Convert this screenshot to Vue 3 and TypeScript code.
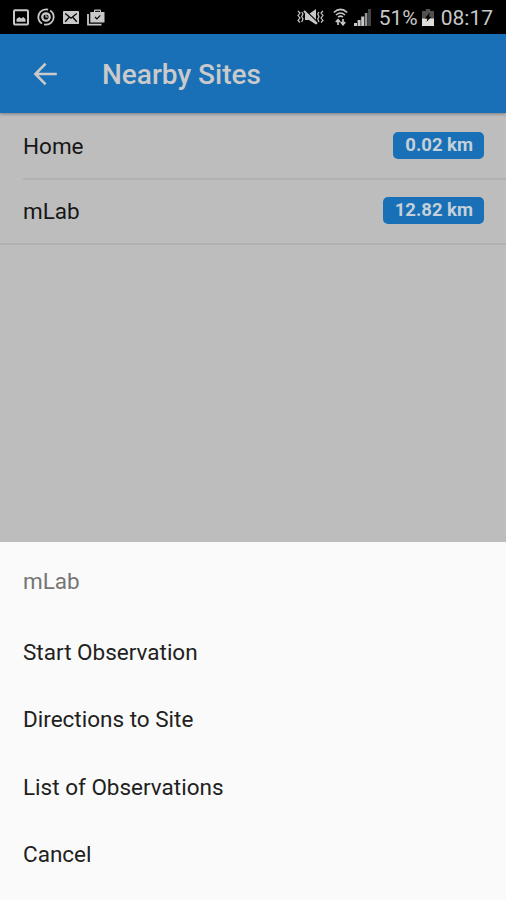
<script setup lang="ts">
interface Site {
  name: string
  distance: string
}

const sites: Site[] = [
  { name: 'Home', distance: '0.02 km' },
  { name: 'mLab', distance: '12.82 km' },
]

const selectedSite = 'mLab'
const actions: string[] = ['Start Observation', 'Directions to Site', 'List of Observations', 'Cancel']
</script>

<template>
  <div class="screen">
    <div class="status">
      <div class="notifications">
        <svg width="16" height="17" viewBox="0 0 16 17">
          <rect x="1" y="1.2" width="14" height="14.4" rx="1" fill="none" stroke="currentColor" stroke-width="2" />
          <path d="M3.5 12.7V10l2.8-2 2 1.5 1.8-1.5 2.4 2v2.7z" fill="currentColor" />
        </svg>
        <svg width="18" height="18" viewBox="0 0 18 18" fill="none" stroke="currentColor">
          <circle cx="9" cy="9" r="7.7" stroke-width="1.8" stroke-dasharray="22 2.2" stroke-dashoffset="8" />
          <circle cx="9" cy="9" r="3.7" stroke-width="2.3" />
          <path d="M9 6v3h2" stroke-width="1.1" />
        </svg>
        <svg width="16" height="13" viewBox="0 0 16 13">
          <rect width="16" height="13" rx=".8" fill="currentColor" />
          <path d="M2.2 2.4L8 7.2l5.8-4.8M2.2 10.8L6 6.5M13.8 10.8L10 6.5" fill="none" stroke="#000" stroke-width="1.3" />
        </svg>
        <svg width="18" height="17" viewBox="0 0 18 17">
          <path d="M1 5v10.6h13.5" fill="none" stroke="currentColor" stroke-width="1.8" />
          <path d="M3.3 3H7V1.5Q7 .5 8 .5h5q1 0 1 1V3h3.5v10.5H3.3z" fill="currentColor" />
          <path d="M8.8 3V2.2h3.6V3M8 8l1.9 1.9 3.4-3.5" fill="none" stroke="#000" stroke-width="1.1" />
        </svg>
      </div>
      <div class="system">
        <svg class="mute" width="27" height="18" viewBox="0 0 27 18" fill="none" stroke="currentColor">
          <path d="M1 3l2 2-2 2.5 2 2.5-2 2.5 2 2M4.7 4l1.3 2-1.3 2.5L6 11l-1.3 3M22 4l-1.3 2 1.3 2.5-1.3 2.5 1.3 3M26 3l-2 2 2 2.5-2 2.5 2 2.5-2 2" stroke-width="1.2" />
          <path d="M8 6h4l7-5v15.6l-7-4.6H8z" fill="currentColor" stroke="none" />
          <path d="M9.5 3.5L20.5 14" stroke="#000" stroke-width="1.3" />
          <path d="M7 3L20 15.8" stroke-width="2" />
        </svg>
        <svg class="wifi" width="15" height="18" viewBox="0 0 15 18" fill="none" stroke="currentColor">
          <path d="M.8 4.5Q7.5-1.8 14.2 4.5M3 7q4.5-4 9 0M5.1 9.2q2.4-2 4.8 0" stroke-width="1.6" />
          <path d="M5 17v-5M2.8 14L5 11.7 7.2 14M10 11v5M7.8 14l2.2 2.7 2.2-2.7" stroke-width="1.7" />
        </svg>
        <svg class="signal" width="17" height="17" viewBox="0 0 17 17" fill="currentColor">
          <path d="M0 14h3v3H0zM3.6 11h3v6h-3zM7.2 7.5h3V17h-3z" />
          <path d="M10.8 4h2.6v13h-2.6z" opacity=".75" />
          <path d="M14 0h3v17h-3z" opacity=".35" />
        </svg>
        <span class="percent">51%</span>
        <svg class="battery" width="12" height="17" viewBox="0 0 12 17">
          <path d="M3.7 0h4.6v2H12v15H0V2h3.7z" fill="currentColor" opacity=".4" />
          <path d="M0 9.5h12V17H0z" fill="#ddd" />
          <path d="M7.8 3.5L2.8 9.5h2.6L4.5 13 9.3 7.8H6.9z" fill="#000" />
        </svg>
        <span class="clock">08:17</span>
      </div>
    </div>
    <header class="toolbar">
      <svg class="back" width="24" height="24" viewBox="0 0 24 24" fill="none" stroke="currentColor" stroke-width="2.6">
        <path d="M12.6 1.6L2.4 12l10.2 10.4M2.2 12h21.6" />
      </svg>
      <h1>Nearby Sites</h1>
    </header>
    <main class="sites">
      <div v-for="site in sites" :key="site.name" class="site">
        <span class="label">{{ site.name }}</span>
        <span class="badge">{{ site.distance }}</span>
      </div>
    </main>
    <section class="sheet">
      <div class="sheet-title">{{ selectedSite }}</div>
      <button v-for="action in actions" :key="action" class="action" type="button">{{ action }}</button>
    </section>
  </div>
</template>

<style>
body {
  margin: 0;
}
</style>

<style scoped>
.screen {
  width: 506px;
  height: 900px;
  display: flex;
  flex-direction: column;
  overflow: hidden;
  background: #bdbdbd;
  color: #171717;
  font-family: Roboto, sans-serif;
  font-size: 22.5px;
}
svg {
  display: block;
  flex: none;
}
.status {
  height: 34px;
  flex: none;
  display: flex;
  justify-content: space-between;
  box-sizing: border-box;
  padding: 0 13px;
  background: #000;
  color: #c8c8c8;
}
.notifications,
.system {
  display: flex;
  align-items: center;
}
.notifications {
  gap: 8px;
}
.system {
  font-size: 21px;
}
.wifi {
  margin-left: 9px;
}
.signal {
  margin-left: 6px;
}
.percent {
  margin-left: 8px;
  padding-top: 2px;
}
.battery {
  margin-left: 4px;
}
.clock {
  margin-left: 7px;
  padding-top: 2px;
}
.toolbar {
  height: 79px;
  flex: none;
  display: flex;
  align-items: center;
  box-sizing: border-box;
  padding-left: 33px;
  background: #1970b7;
  color: #cacaca;
  box-shadow: 0 1px 3px rgba(0, 0, 0, 0.35);
  z-index: 1;
}
h1 {
  margin: 1px 0 0 45px;
  font-size: 28px;
  font-weight: 500;
}
.sites {
  height: 429px;
  flex: none;
}
.site {
  display: flex;
  align-items: center;
  justify-content: space-between;
  box-sizing: border-box;
  height: 65px;
  margin-left: 23px;
  padding-right: 22px;
  border-bottom: 2px solid #b1b1b1;
}
.site:first-child {
  height: 67px;
}
.site:last-child {
  margin-left: 0;
  padding-left: 23px;
  padding-bottom: 2px;
}
.badge {
  box-sizing: border-box;
  height: 27px;
  padding: 0 11px 0 12px;
  border-radius: 5px;
  background: #1970b7;
  color: #c6d0d9;
  font-size: 18.5px;
  font-weight: 700;
  line-height: 26px;
}
.sheet {
  flex: 1;
  display: flex;
  flex-direction: column;
  background: #fafafa;
}
.sheet-title {
  height: 76px;
  line-height: 79px;
  padding-left: 23px;
  color: #757575;
}
.action {
  height: 67.5px;
  padding: 0 0 0 23px;
  border: 0;
  background: none;
  color: #212121;
  font: inherit;
  text-align: left;
}
</style>
